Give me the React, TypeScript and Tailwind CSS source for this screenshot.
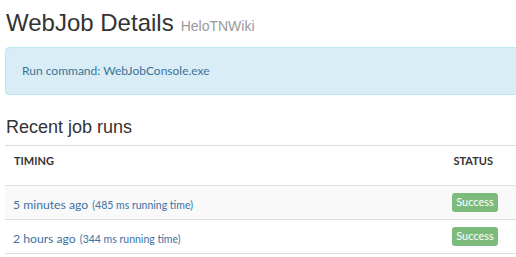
const runs = [
  { ago: "5 minutes ago", ms: 485, striped: true },
  { ago: "2 hours ago", ms: 344, striped: false },
];

export default function App() {
  return (
    <div className="h-[257px] w-[516px] overflow-hidden bg-white pl-[5px] font-['Lato','Open_Sans',sans-serif]">
      <div className="flex items-baseline gap-[7px] pl-[1px] pt-[10px] font-['Liberation_Sans',Arial,sans-serif]">
        <h1 className="text-[24px] leading-[26px] text-[#333]">WebJob Details</h1>
        <span className="text-[14px] text-[#999]">HeloTNWiki</span>
      </div>

      <div className="mt-[10px] flex h-[48px] w-[530px] items-center rounded-[4px] border border-[#bce8f1] bg-[#d9edf7] pl-[16px] text-[12px] text-[#3c7396]">
        Run command: WebJobConsole.exe
      </div>

      <h2 className="mt-[22px] pl-[1px] font-['Liberation_Sans',Arial,sans-serif] text-[18px] leading-[20px] text-[#333]">
        Recent job runs
      </h2>

      <div className="mt-[8px] w-[520px] border-t border-[#ddd]">
        <div className="flex h-[40px] items-start justify-between border-b border-[#ddd] pl-[9px] pr-[32px] pt-[7px] text-[11px] font-bold text-[#333]">
          <span>TIMING</span>
          <span>STATUS</span>
        </div>
        {runs.map((run) => (
          <div
            key={run.ago}
            className={`flex h-[34px] items-center justify-between border-b border-[#ddd] pl-[8px] pr-[27px] ${run.striped ? "bg-[#f9f9f9]" : "bg-white"}`}
          >
            <span className="text-[#4072a3]">
              <span className="text-[12.2px]">{run.ago}</span>{" "}
              <span className="text-[10.5px]">({run.ms} ms running time)</span>
            </span>
            <span className="flex h-[19px] w-[46px] items-center justify-center rounded-[3px] bg-[#7dbb7d] text-[11px] text-white">
              Success
            </span>
          </div>
        ))}
      </div>
    </div>
  );
}
